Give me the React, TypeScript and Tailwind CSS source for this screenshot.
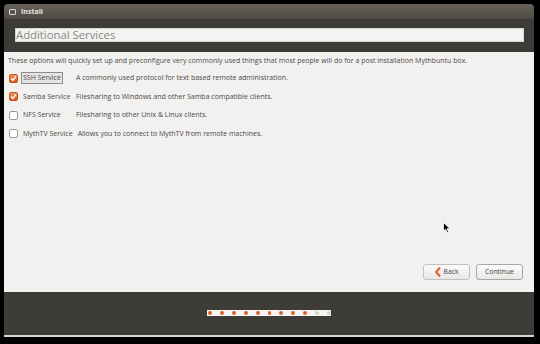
import React from 'react';

const services = [
  { name: 'SSH Service', desc: 'A commonly used protocol for text based remote administration.', checked: true, focus: true },
  { name: 'Samba Service', desc: 'Filesharing to Windows and other Samba compatible clients.', checked: true },
  { name: 'NFS Service', desc: 'Filesharing to other Unix & Linux clients.', checked: false },
  { name: 'MythTV Service', desc: 'Allows you to connect to MythTV from remote machines.', checked: false },
];

function Checkbox({ checked }: { checked: boolean }) {
  if (checked) {
    return (
      <div className="w-[9px] h-[9px] shrink-0 rounded-[2px] bg-gradient-to-b from-[#f2925a] to-[#d9541c] border border-[#c4501c] flex items-center justify-center">
        <svg width="7" height="7" viewBox="0 0 7 7">
          <path d="M1 3.6 L2.8 5.4 L6 1.4" stroke="#fff" strokeWidth="1.4" fill="none" />
        </svg>
      </div>
    );
  }
  return <div className="w-[9px] h-[9px] shrink-0 rounded-[2px] bg-white border border-[#9a9893]" />;
}

export default function App() {
  const dots = Array.from({ length: 11 }, (_, i) => i);

  return (
    <div className="w-[540px] h-[344px] bg-black pt-[4px] pl-[4px] font-['Open_Sans',sans-serif]">
      <div className="relative w-[530px] h-[333px] flex flex-col rounded-t-[4px] overflow-hidden">
        {/* Title bar */}
        <div className="h-[15px] bg-gradient-to-b from-[#68615b] to-[#4e4944] flex items-center pl-[5px] gap-[5px]">
          <div className="w-[7px] h-[6px] border border-[#d8d4cf] rounded-[1px]" />
          <span className="text-[7px] font-bold text-[#e8e4df] leading-none">Install</span>
        </div>

        {/* Header */}
        <div className="h-[33px] bg-[#3c3b37] pt-[9px] pl-[11px] pr-[10px]">
          <div className="h-[14px] bg-[#f4f3f1] border border-[#d8d6d2] flex items-center">
            <span className="text-[11.3px] text-[#8a8884] leading-none">Additional Services</span>
          </div>
        </div>

        {/* Content */}
        <div className="h-[240px] bg-[#f2f1f0] flex flex-col text-[#4a4a48]">
          <div className="pl-[4px] pt-[4px] text-[7px] leading-[9px] whitespace-nowrap">
            These options will quickly set up and preconfigure very commonly used things that most people will do for a post installation Mythbuntu box.
          </div>
          <div className="flex flex-col gap-[6px] pl-[5px] pt-[7px]">
            {services.map(s => (
              <div key={s.name} className="flex items-center h-[12.5px] text-[7px] whitespace-nowrap">
                <Checkbox checked={s.checked} />
                <div className="ml-[3px] min-w-[52px] shrink-0 flex">
                  <span
                    className={
                      'px-[1px] leading-[10px] ' +
                      (s.focus ? 'border border-[#8e8c88] bg-[#e6e5e3]' : 'border border-transparent')
                    }
                  >
                    {s.name}
                  </span>
                </div>
                <span className="ml-[3px]">{s.desc}</span>
              </div>
            ))}
          </div>
          <div className="flex-1" />
          <div className="flex justify-end gap-[6px] pr-[11px] pb-[12px]">
            <button className="w-[47px] h-[16px] rounded-[3px] border border-[#c2c0bc] bg-gradient-to-b from-[#fbfbfa] to-[#e9e8e6] flex items-center justify-center gap-[3px] text-[6.8px] text-[#3c3c3c]">
              <svg width="6" height="10" viewBox="0 0 6 10">
                <path d="M5 0.5 L1.2 5 L5 9.5" stroke="#e0662a" strokeWidth="2.2" fill="none" />
              </svg>
              Back
            </button>
            <button className="w-[47px] h-[16px] rounded-[3px] border border-[#a9a7a3] bg-gradient-to-b from-[#fbfbfa] to-[#e9e8e6] flex items-center justify-center text-[6.8px] text-[#3c3c3c]">
              Continue
            </button>
          </div>
        </div>

        {/* Footer with progress */}
        <div className="h-[43px] bg-[#3d3c36] flex justify-center items-start pt-[18px]">
          <div className="w-[124px] h-[6px] bg-[#f6f5f3] flex items-center gap-[8px] pl-[1px]">
            {dots.map(i => (
              <div
                key={i}
                className={
                  'w-[4px] h-[4px] rounded-full ' +
                  (i < 9 ? 'bg-[#d8662e]' : 'bg-[#d4d2ce]')
                }
              />
            ))}
          </div>
        </div>
        <div className="h-[2px] bg-[#d8d6d2]" />

        {/* Mouse pointer */}
        <svg className="absolute left-[439px] top-[218px]" width="8" height="12" viewBox="0 0 8 12">
          <path d="M0.5 0.5 L0.5 9 L2.6 7.2 L4.2 10.8 L5.6 10.2 L4 6.8 L7 6.8 Z" fill="#000" stroke="#fff" strokeWidth="0.8" />
        </svg>
      </div>
    </div>
  );
}
